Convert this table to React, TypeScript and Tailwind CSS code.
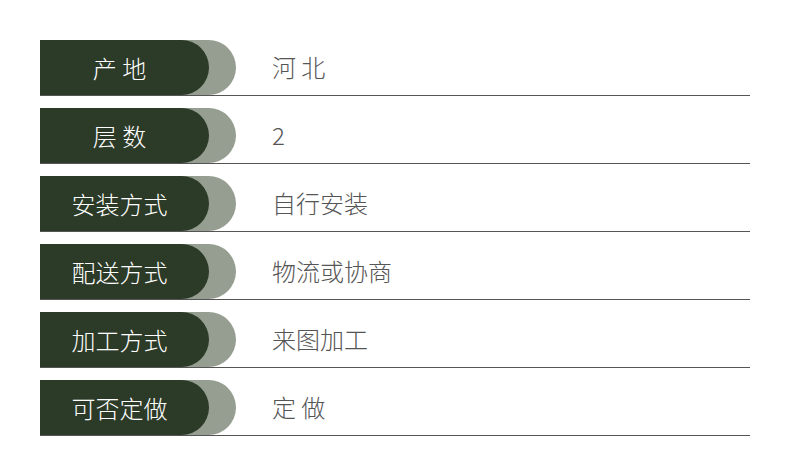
import React from 'react';

const specs = [
  { label: '产 地', value: '河 北' },
  { label: '层 数', value: '2' },
  { label: '安装方式', value: '自行安装' },
  { label: '配送方式', value: '物流或协商' },
  { label: '加工方式', value: '来图加工' },
  { label: '可否定做', value: '定 做' },
];

const App: React.FC = () => {
  return (
    <div
      className="w-[790px] h-[476px] bg-white pt-10 px-10"
      style={{ fontFamily: '"Noto Sans CJK SC", "Noto Sans", sans-serif' }}
    >
      <div className="flex flex-col gap-3">
        {specs.map((spec) => (
          <div key={spec.label} className="flex items-center h-14 border-b border-[#555555]">
            {/* label pill with grey shadow tab */}
            <div className="h-[55px] w-[196px] bg-[#969e92] rounded-r-[28px] self-start">
              <div className="h-full w-[169px] bg-[#2c3a28] rounded-r-[28px] flex items-center justify-center pr-[10px] text-white text-[24px] font-light">
                {spec.label}
              </div>
            </div>
            <div className="pl-[36px] text-[24px] font-light text-[#555555] -mt-px">{spec.value}</div>
          </div>
        ))}
      </div>
    </div>
  );
};

export default App;
